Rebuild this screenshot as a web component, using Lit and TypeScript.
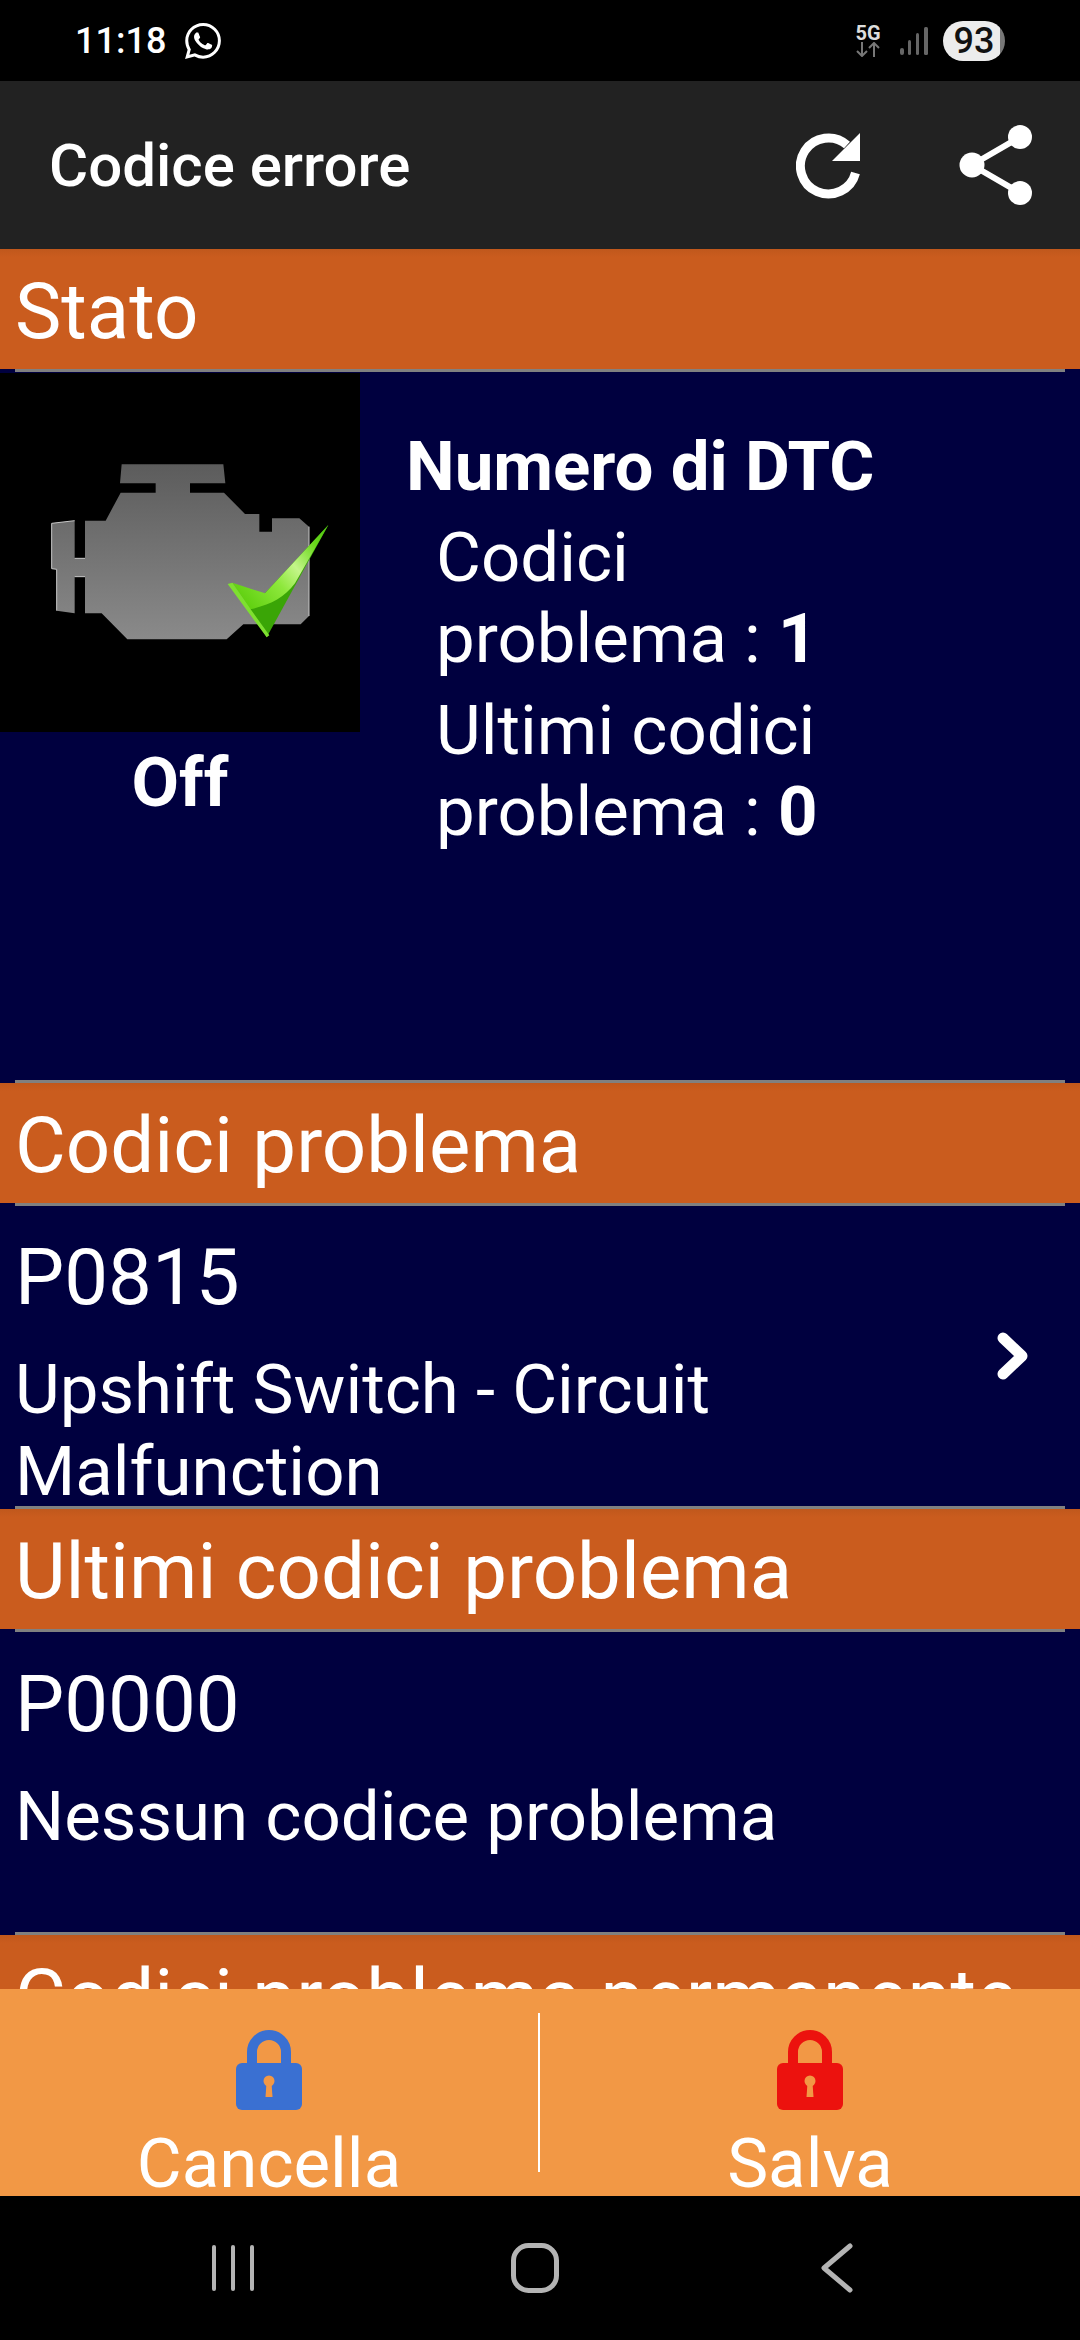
import { LitElement, html, css, svg } from 'lit';
import { customElement } from 'lit/decorators.js';

const whatsapp = svg`<path fill="#fff" d="M17.472 14.382c-.297-.149-1.758-.867-2.03-.967-.273-.099-.471-.148-.67.15-.197.297-.767.966-.94 1.164-.173.199-.347.223-.644.075-.297-.15-1.255-.463-2.39-1.475-.883-.788-1.48-1.761-1.653-2.059-.173-.297-.018-.458.13-.606.134-.133.298-.347.446-.52.149-.174.198-.298.298-.497.099-.198.05-.371-.025-.52-.075-.149-.669-1.612-.916-2.207-.242-.579-.487-.5-.669-.51-.173-.008-.371-.01-.57-.01-.198 0-.52.074-.792.372-.272.297-1.04 1.016-1.04 2.479 0 1.462 1.065 2.875 1.213 3.074.149.198 2.096 3.2 5.077 4.487.709.306 1.262.489 1.694.625.712.227 1.36.195 1.871.118.571-.085 1.758-.719 2.006-1.413.248-.694.248-1.289.173-1.413-.074-.124-.272-.198-.57-.347m-5.421 7.403h-.004a9.87 9.87 0 01-5.031-1.378l-.361-.214-3.741.982.998-3.648-.235-.374a9.86 9.86 0 01-1.51-5.26c.001-5.45 4.436-9.884 9.888-9.884 2.64 0 5.122 1.03 6.988 2.898a9.825 9.825 0 012.893 6.994c-.003 5.45-4.437 9.884-9.885 9.884m8.413-18.297A11.815 11.815 0 0012.05 0C5.495 0 .16 5.335.157 11.892c0 2.096.547 4.142 1.588 5.945L.057 24l6.305-1.654a11.882 11.882 0 005.683 1.448h.005c6.554 0 11.89-5.335 11.893-11.893a11.821 11.821 0 00-3.48-8.413z"/>`;

const lock = (cls: string) => html`<svg class="lock ${cls}" viewBox="0 0 66 80" width="66" height="80">
  <path class="shackle" d="M16 38V22a17 17 0 0 1 34 0V38" fill="none" stroke-width="10"/>
  <rect class="body" x="0" y="33" width="66" height="47" rx="6"/>
  <circle cx="33" cy="51" r="5.5" fill="#f29845"/>
  <path d="M30.5 53h5l1 14h-7z" fill="#f29845"/>
</svg>`;

@customElement('app-root')
export class AppRoot extends LitElement {
  static styles = css`
    :host {
      display: block;
      width: 1080px;
      height: 2340px;
      font-family: Roboto, sans-serif;
      color: #fff;
      background: #000;
    }
    .screen {
      height: 2340px;
      display: flex;
      flex-direction: column;
      overflow: hidden;
    }

    .status {
      height: 81px;
      flex: none;
      background: #000;
      display: flex;
      align-items: center;
      padding: 0 75px 0 75px;
      box-sizing: border-box;
    }
    .time {
      font-size: 36px;
      font-weight: 500;
      margin-right: 19px;
    }
    .spacer { flex: 1; }
    .net {
      width: 24px;
      display: flex;
      flex-direction: column;
      align-items: center;
      margin-right: 19px;
    }
    .net b {
      font-size: 20px;
      line-height: 18px;
      font-weight: 700;
      color: #ddd;
    }
    .battery {
      margin-left: 14px;
      width: 62px;
      height: 40px;
      border-radius: 20px;
      background: linear-gradient(to right, #ececec 92%, #777 92%);
      color: #111;
      font-size: 36px;
      font-weight: 500;
      line-height: 41px;
      text-align: center;
    }

    .appbar {
      height: 168px;
      flex: none;
      background: #222;
      display: flex;
      align-items: center;
      padding: 0 47px 0 49px;
      box-sizing: border-box;
    }
    .title {
      flex: 1;
      font-size: 60px;
      font-weight: 500;
      padding-top: 1px;
    }
    .appbar svg { display: block; }
    .refresh { margin-right: 97px; }

    .content {
      flex: 1;
      min-height: 0;
      overflow: hidden;
      background: #00003f;
    }
    .heading {
      height: 120px;
      box-sizing: border-box;
      background: linear-gradient(to bottom, #c0581c, #ca5c1e 8px);
      padding: 7px 0 0 15px;
      font-size: 78px;
      line-height: 112px;
      white-space: nowrap;
    }
    .line {
      height: 3px;
      margin: 0 15px;
      background: #808080;
    }

    .state {
      height: 708px;
      display: grid;
      grid-template-columns: 360px 1fr;
      font-size: 69px;
      line-height: 81px;
    }
    .light { padding-top: 1px; }
    .light svg { display: block; }
    .off {
      margin-top: 10px;
      text-align: center;
      font-weight: 700;
    }
    .counts { padding: 54px 0 0 46px; }
    .counts h2 {
      margin: 0 0 10px;
      font: inherit;
      font-weight: 700;
    }
    .counts p { margin: 0 0 11px 30px; }
    .counts b { font-weight: 700; }

    .code {
      height: 300px;
      box-sizing: border-box;
      overflow: hidden;
      padding: 27px 0 0 15px;
      position: relative;
    }
    .code.second { padding-top: 28px; }
    .code .num {
      font-size: 78px;
      line-height: 90px;
    }
    .code .desc {
      width: 800px;
      margin-top: 26px;
      font-size: 69px;
      line-height: 82px;
    }
    .chevron {
      position: absolute;
      top: 122px;
      left: 990px;
    }

    .actions {
      height: 207px;
      flex: none;
      background: #f29845;
      display: grid;
      grid-template-columns: 538px 2px 1fr;
    }
    .action {
      display: flex;
      flex-direction: column;
      align-items: center;
      padding-top: 41px;
      font-size: 69px;
      line-height: 65px;
    }
    .lock { display: block; flex: none; margin-bottom: 21px; }
    .lock.blue .shackle { stroke: #3a70d2; }
    .lock.blue .body { fill: #3a70d2; }
    .lock.red .shackle { stroke: #ec120e; }
    .lock.red .body { fill: #ec120e; }
    .sep {
      background: #fff;
      margin: 24px 0;
    }

    .nav {
      height: 144px;
      flex: none;
      background: #000;
      display: grid;
      grid-template-columns: repeat(3, 302px);
      justify-items: center;
      align-items: center;
      padding: 0 92px 0 82px;
      box-sizing: border-box;
    }
    .nav svg { display: block; }
  `;

  render() {
    return html`
      <div class="screen">
        <div class="status">
          <span class="time">11:18</span>
          <svg viewBox="0 0 24 24" width="36" height="36">${whatsapp}</svg>
          <span class="spacer"></span>
          <div class="net">
            <b>5G</b>
            <svg width="24" height="15" viewBox="0 0 24 15" fill="none" stroke="#777" stroke-width="2">
              <path d="M6 0v14M1 9l5 5 5-5"/>
              <path d="M18 15V1M13 6l5-5 5 5"/>
            </svg>
          </div>
          <svg width="30" height="30" viewBox="0 0 30 30" fill="#666">
            <rect x="1" y="22" width="4" height="7" rx="2"/>
            <rect x="9" y="14" width="3" height="15" rx="1.5"/>
            <rect x="17" y="7" width="3" height="22" rx="1.5"/>
            <rect x="25" y="1" width="4" height="28" rx="1.5"/>
          </svg>
          <span class="battery">93</span>
        </div>

        <div class="appbar">
          <span class="title">Codice errore</span>
          <svg class="refresh" width="66" height="68" viewBox="0 0 66 68">
            <path d="M51 14A28 28 0 1 0 59.500 42" fill="none" stroke="#fff" stroke-width="9"/>
            <path d="M64 2V30H36z" fill="#fff"/>
          </svg>
          <svg width="74" height="80" viewBox="0 0 74 80" fill="#fff">
            <path d="M61 12L13 40L61 68" fill="none" stroke="#fff" stroke-width="6"/>
            <circle cx="61" cy="12" r="12"/>
            <circle cx="13" cy="40" r="12.500"/>
            <circle cx="61" cy="68" r="12"/>
          </svg>
        </div>

        <div class="content">
          <div class="heading">Stato</div>
          <div class="line"></div>
          <div class="state">
            <div class="light">
              <svg width="360" height="359" viewBox="0 39 1080 1077">
                <defs>
                  <linearGradient id="eng" x1="0" y1="0" x2="0" y2="1">
                    <stop offset="0" stop-color="#5c5c5c"/>
                    <stop offset="1" stop-color="#8a8a8a"/>
                  </linearGradient>
                  <linearGradient id="chk" gradientUnits="userSpaceOnUse" x1="720" y1="720" x2="985" y2="495">
                    <stop offset="0" stop-color="#5ecf0e"/>
                    <stop offset="0.35" stop-color="#8ee83c"/>
                    <stop offset="0.55" stop-color="#c4f58a"/>
                    <stop offset="0.8" stop-color="#6ad81c"/>
                    <stop offset="1" stop-color="#4cc010"/>
                  </linearGradient>
                </defs>
                <rect x="0" y="39" width="1080" height="1077" fill="#000"/>
                <path fill="url(#eng)" d="M365 313H670L676 370H570V398H672L735 462H778V515H816V475H898L927 500V768L902 793H730L680 838H382L305 760H255V650H224V760L170 752V628L155 626V490L224 482V595H255V482H317L362 398H467V370H360z"/>
                <path fill="none" stroke="#c8c8c8" stroke-width="3" d="M224 482L155 490V626L170 628V752M224 595H255M224 650H255M927 500V768"/>
                <path fill="#3aa506" d="M985 495L750 748L800 832z"/>
                <path fill="url(#chk)" d="M985 495L795 700L697 668L750 748C810 735 850 715 885 670z"/>
                <path fill="#7ee030" d="M683 672L697 668L752 748L808 826L800 832z"/>
              </svg>
              <div class="off">Off</div>
            </div>
            <div class="counts">
              <h2>Numero di DTC</h2>
              <p>Codici<br />problema : <b>1</b></p>
              <p>Ultimi codici<br />problema : <b>0</b></p>
            </div>
          </div>
          <div class="line"></div>

          <div class="heading">Codici problema</div>
          <div class="line"></div>
          <div class="code">
            <div class="num">P0815</div>
            <div class="desc">Upshift Switch - Circuit Malfunction</div>
            <svg class="chevron" width="46" height="56" viewBox="0 0 46 56" fill="none" stroke="#fff" stroke-width="11" stroke-linecap="round" stroke-linejoin="round">
              <path d="M13 10L32 28L13 46"/>
            </svg>
          </div>
          <div class="line"></div>

          <div class="heading">Ultimi codici problema</div>
          <div class="line"></div>
          <div class="code second">
            <div class="num">P0000</div>
            <div class="desc">Nessun codice problema</div>
          </div>
          <div class="line"></div>

          <div class="heading">Codici problema permanente</div>
        </div>

        <div class="actions">
          <div class="action">${lock('blue')}<span>Cancella</span></div>
          <div class="sep"></div>
          <div class="action">${lock('red')}<span>Salva</span></div>
        </div>

        <div class="nav">
          <svg width="44" height="48" viewBox="0 0 44 48" fill="#b4b4b4">
            <rect x="1" y="1" width="4" height="46" rx="2"/>
            <rect x="20" y="1" width="4" height="46" rx="2"/>
            <rect x="39" y="1" width="4" height="46" rx="2"/>
          </svg>
          <svg width="48" height="50" viewBox="0 0 48 50">
            <rect x="2.500" y="2.500" width="43" height="45" rx="15" fill="none" stroke="#b4b4b4" stroke-width="5"/>
          </svg>
          <svg width="32" height="50" viewBox="0 0 32 50" fill="none" stroke="#b4b4b4" stroke-width="5" stroke-linecap="round" stroke-linejoin="round">
            <path d="M29 3L3 25L29 47"/>
          </svg>
        </div>
      </div>
    `;
  }
}
